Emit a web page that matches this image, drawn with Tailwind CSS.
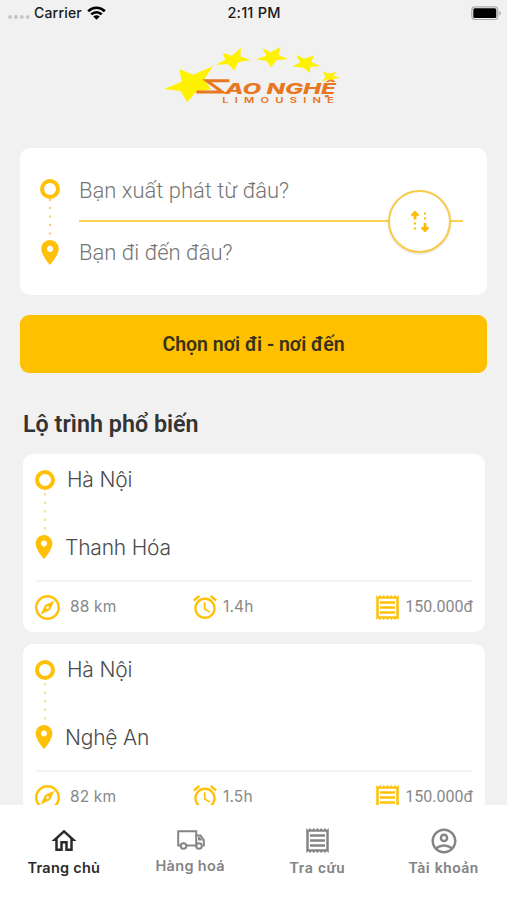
<!DOCTYPE html>
<html lang="vi">
<head>
    <meta charset="UTF-8">
    <meta name="viewport" content="width=device-width, initial-scale=1.0">
    <title>Sao Nghệ Limousine</title>
    <script src="https://cdn.jsdelivr.net/npm/@tailwindcss/browser@4"></script>
</head>
<body class="bg-[#f1f1f1] font-['Inter','Liberation_Sans',sans-serif]">
    <!-- Shared icons -->
    <svg class="hidden">
        <symbol id="pin" viewBox="5 2 14 20"><path d="M12 2C8.13 2 5 5.13 5 9c0 5.25 7 13 7 13s7-7.75 7-13c0-3.87-3.13-7-7-7zm0 9.5c-1.38 0-2.5-1.12-2.5-2.5s1.12-2.5 2.5-2.5 2.5 1.12 2.5 2.5-1.12 2.5-2.5 2.5z"/></symbol>
        <symbol id="compass" viewBox="2 2 20 20"><path d="M12 2C6.48 2 2 6.48 2 12s4.48 10 10 10 10-4.48 10-10S17.52 2 12 2zm0 18c-4.41 0-8-3.59-8-8s3.59-8 8-8 8 3.59 8 8-3.59 8-8 8zm-5.5-2.5l7.51-3.49L17.5 6.5 9.99 9.99 6.5 17.5zm5.5-6.6c.61 0 1.1.49 1.1 1.1s-.49 1.1-1.1 1.1-1.1-.49-1.1-1.1.49-1.1 1.1-1.1z"/></symbol>
        <symbol id="alarm" viewBox="2 1.86 20 20.14"><path d="M22 5.72l-4.6-3.86-1.29 1.53 4.6 3.86L22 5.72zM7.88 3.39L6.6 1.86 2 5.71l1.29 1.53 4.59-3.85zM12.5 8H11v6l4.75 2.85.75-1.23-4-2.37V8zM12 4c-4.97 0-9 4.03-9 9s4.02 9 9 9c4.97 0 9-4.03 9-9s-4.03-9-9-9zm0 16c-3.87 0-7-3.13-7-7s3.13-7 7-7 7 3.13 7 7-3.13 7-7 7z"/></symbol>
        <symbol id="receipt" viewBox="3 2 18 20"><path d="M19.5 3.5L18 2l-1.5 1.5L15 2l-1.5 1.5L12 2l-1.5 1.5L9 2 7.5 3.5 6 2 4.5 3.5 3 2v20l1.5-1.5L6 22l1.5-1.5L9 22l1.5-1.5L12 22l1.5-1.5L15 22l1.5-1.5L18 22l1.5-1.5L21 22V2l-1.5 1.5zM19 19.09H5V4.91h14v14.18zM6 15h12v2H6zm0-4h12v2H6zm0-4h12v2H6z"/></symbol>
    </svg>

    <div class="flex h-[900px] w-[507px] flex-col overflow-hidden">
        <!-- Status bar -->
        <header class="grid h-[26px] shrink-0 grid-cols-3 items-center pr-[6px] pl-2 text-[14px] font-medium text-[#1a1a1a]">
            <div class="-mt-[1px] flex items-center">
                <svg class="mt-2 h-1 w-[22px] fill-[#c4c4c4]" viewBox="0 0 22 4"><circle cx="2" cy="2" r="1.9"/><circle cx="7.9" cy="2" r="1.9"/><circle cx="13.8" cy="2" r="1.9"/><circle cx="19.6" cy="2" r="1.9"/></svg>
                <span class="ml-1 tracking-[0.2px]">Carrier</span>
                <svg class="ml-[5px] h-[14px] w-[19px] fill-none stroke-black stroke-[2.7]" viewBox="0 0 19 14"><path d="M1.2 5.2a11.7 11.7 0 0 1 16.6 0M4.3 8.4a7.4 7.4 0 0 1 10.4 0"/><path class="fill-black stroke-none" d="M6.3 10.5a4.6 4.6 0 0 1 6.4 0L9.5 13.8z"/></svg>
            </div>
            <span class="-ml-[1px] -mt-[1px] text-center text-[14.5px] tracking-[0.2px]">2:11 PM</span>
            <svg class="h-[14px] w-[30px] justify-self-end" viewBox="0 0 30 14"><rect x=".8" y=".8" width="26" height="12.8" rx="3.4" fill="none" stroke="#aaa" stroke-width="1.2"/><rect x="2.3" y="2.3" width="23" height="9.8" rx="1.6"/><path d="M28.3 5v4.4q1.5-.5 1.5-2.2T28.3 5z" fill="#aaa"/></svg>
        </header>

        <main class="flex min-h-0 flex-1 flex-col overflow-hidden">
            <!-- Logo -->
            <div class="mt-[14px] ml-[155px] h-[70px] w-[195px] shrink-0">
                <svg class="h-full w-full" viewBox="0 0 585 210">
                    <g fill="#fff200">
                        <path d="M73 87L114 104 174 79 148 118 168 148 122 156 97 187 76 153 27 147 80 125z"/>
                        <path d="M203 38L231 47 258 23 256 49 286 60 250 67 238 91 219 73 182 74 211 59z"/>
                        <path d="M322 25L347 37 377 21 370 44 399 57 365 61 348 82 335 63 303 58 334 47z"/>
                        <path d="M423 45L449 56 477 46 469 66 496 78 466 81 464 100 447 84 412 79 436 67z"/>
                        <path d="M504 94L522 101 544 95 535 107 556 113 535 117 534 128 519 118 499 126 511 112z"/>
                    </g>
                    <path d="M223 122H155L202 156H124" fill="none" stroke="#e87722" stroke-width="9"/>
                    <g class="font-['Inter','Liberation_Sans',sans-serif]" fill="#e87722">
                        <text class="text-[42px] font-extrabold italic" x="210" y="162" textLength="333" lengthAdjust="spacingAndGlyphs">AO NGHỆ</text>
                        <g transform="translate(202 189) scale(1.4 1)"><text class="text-[24px] font-semibold" x="0" y="0" textLength="239">LIMOUSINE</text></g>
                    </g>
                </svg>
            </div>

            <!-- Search -->
            <section class="relative mx-5 mt-[38px] flex h-[147px] shrink-0 rounded-[10px] bg-white pr-6 pl-5">
                <div class="flex w-[39px] flex-col pt-[31px]">
                    <div class="h-5 w-5 shrink-0 rounded-full border-[4px] border-[#ffc107]"></div>
                    <svg class="ml-2 h-[41px] w-1 fill-[#f5cf55]" viewBox="0 0 4 41"><path d="M1 0h2v2h-2zm0 8h2v2h-2zm0 8.5h2v2h-2zm0 8.5h2v2h-2zm0 8.5h2v2h-2z"/></svg>
                    <svg class="ml-[1px] h-[25px] w-[18px] fill-[#ffc107]"><use href="#pin"/></svg>
                </div>
                <div class="flex flex-1 flex-col font-['Roboto','Liberation_Sans',sans-serif] text-[22px] font-light text-[#757575]">
                    <div class="flex h-[74px] items-center border-b-2 border-[#fdd050] pt-[12px]">Bạn xuất phát từ đâu?</div>
                    <div class="flex h-[61px] items-center">Bạn đi đến đâu?</div>
                </div>
                <button class="absolute top-[42px] right-[36px] flex h-[63px] w-[63px] items-center justify-center rounded-full border-2 border-[#f8cb4c] bg-white shadow">
                    <svg class="h-[23px] w-[19px] fill-[#fbbc05]" viewBox="0 0 19 23"><path d="M5 .5l4.2 4.3-1.2 1.7-1.6-1v4H3.6v-4l-1.6 1L.8 4.8zM15 22.5l-4.2-4.3 1.2-1.7 1.6 1v-4.5h2.8v4.5l1.6-1 1.2 1.7z"/><path d="M3.9 12.5h2v2h-2zm0 5h2v2h-2zM14 2.5h2v2h-2zm0 5h2v2h-2z"/></svg>
                </button>
            </section>

            <button class="mx-5 mt-5 h-[58px] shrink-0 rounded-[9px] bg-[#ffc000] pt-[1px] font-['Roboto','Liberation_Sans',sans-serif] text-[19.5px] font-semibold text-[#38311c]">Chọn nơi đi - nơi đến</button>

            <h2 class="mt-[36px] ml-[23px] h-[30px] shrink-0 font-['Roboto','Liberation_Sans',sans-serif] text-[23.3px] leading-[30px] font-semibold text-[#333]">Lộ trình phổ biến</h2>

            <!-- Popular routes -->
            <div class="mr-[22px] ml-[23px] mt-[15px] flex flex-col gap-3">
                <article class="h-[178px] shrink-0 rounded-[10px] bg-white px-3">
                    <div class="flex h-[126px]">
                        <div class="flex w-[30px] flex-col pt-[16px]">
                            <div class="h-5 w-5 shrink-0 rounded-full border-[4px] border-[#ffc107]"></div>
                            <svg class="ml-2 h-[45px] w-1 fill-[#f7e08a]" viewBox="0 0 4 45"><path d="M1 3h2v2.5h-2zm0 8.5h2v2.5h-2zm0 8.5h2v2.5h-2zm0 8.5h2v2.5h-2zm0 8.5h2v2.5h-2z"/></svg>
                            <svg class="h-6 w-[18px] fill-[#ffc107]"><use href="#pin"/></svg>
                        </div>
                        <div class="flex flex-1 flex-col pt-3 text-[21px] leading-7 font-light tracking-[-0.2px] text-[#4c4c4c]">
                            <span class="ml-[2px]">Hà Nội</span>
                            <span class="mt-10">Thanh Hóa</span>
                        </div>
                    </div>
                    <div class="ml-[1px] flex h-[52px] items-center border-t-2 border-[#f3f3f3] text-[15.5px] text-[#888]">
                        <svg class="-ml-[1px] h-[25px] w-[25px] fill-[#ffc107]"><use href="#compass"/></svg>
                        <span class="ml-[10px] w-[123px] tracking-[0.15px]">88 km</span>
                        <svg class="h-6 w-6 fill-[#ffc107]"><use href="#alarm"/></svg>
                        <span class="ml-[6px] tracking-[0.15px]">1.4h</span>
                        <svg class="ml-auto h-[25px] w-[23px] fill-[#ffc107]"><use href="#receipt"/></svg>
                        <span class="ml-[6px] font-['Roboto','Liberation_Sans',sans-serif] text-[16px]">150.000đ</span>
                    </div>
                </article>
                <article class="h-[178px] shrink-0 rounded-[10px] bg-white px-3">
                    <div class="flex h-[126px]">
                        <div class="flex w-[30px] flex-col pt-[16px]">
                            <div class="h-5 w-5 shrink-0 rounded-full border-[4px] border-[#ffc107]"></div>
                            <svg class="ml-2 h-[45px] w-1 fill-[#f7e08a]" viewBox="0 0 4 45"><path d="M1 3h2v2.5h-2zm0 8.5h2v2.5h-2zm0 8.5h2v2.5h-2zm0 8.5h2v2.5h-2zm0 8.5h2v2.5h-2z"/></svg>
                            <svg class="h-6 w-[18px] fill-[#ffc107]"><use href="#pin"/></svg>
                        </div>
                        <div class="flex flex-1 flex-col pt-3 text-[21px] leading-7 font-light tracking-[-0.2px] text-[#4c4c4c]">
                            <span class="ml-[2px]">Hà Nội</span>
                            <span class="mt-10">Nghệ An</span>
                        </div>
                    </div>
                    <div class="ml-[1px] flex h-[52px] items-center border-t-2 border-[#f3f3f3] text-[15.5px] text-[#888]">
                        <svg class="-ml-[1px] h-[25px] w-[25px] fill-[#ffc107]"><use href="#compass"/></svg>
                        <span class="ml-[10px] w-[123px] tracking-[0.15px]">82 km</span>
                        <svg class="h-6 w-6 fill-[#ffc107]"><use href="#alarm"/></svg>
                        <span class="ml-[6px] tracking-[0.15px]">1.5h</span>
                        <svg class="ml-auto h-[25px] w-[23px] fill-[#ffc107]"><use href="#receipt"/></svg>
                        <span class="ml-[6px] font-['Roboto','Liberation_Sans',sans-serif] text-[16px]">150.000đ</span>
                    </div>
                </article>
            </div>
        </main>

        <!-- Bottom tabs -->
        <nav class="grid h-[95px] shrink-0 grid-cols-4 bg-white text-[14.5px] font-semibold text-[#858585]">
            <a href="#" class="flex flex-col items-center pt-[21px] text-[#2b2b2b]">
                <svg class="ml-[1px] h-[30px] w-[30px] fill-current" viewBox="0 0 24 24"><path d="M12 5.69l5 4.5V18h-2v-6H9v6H7v-7.81l5-4.5M12 3L2 12h3v8h6v-6h2v6h6v-8h3L12 3z"/></svg>
                <span class="mt-[1px] ml-[1px] tracking-[0.25px]">Trang chủ</span>
            </a>
            <a href="#" class="flex flex-col items-center pt-[24px]">
                <svg class="ml-[1px] h-[22px] w-[28px] fill-none stroke-current stroke-2" viewBox="0 0 28 22"><path d="M3.5 16.5H1.2V2.2h18v14.3H9.5M19.2 6.5h4.3l3.3 4.5v5.5h-1"/><path class="fill-current stroke-none" d="M21 8h2l2.6 3.5H21z"/><circle cx="6.5" cy="17" r="2.8"/><circle cx="22" cy="17" r="2.8"/></svg>
                <span class="mt-[4px] tracking-[0.3px]">Hàng hoá</span>
            </a>
            <a href="#" class="flex flex-col items-center pt-[23px]">
                <svg class="ml-[1px] h-[25px] w-[23px] fill-current"><use href="#receipt"/></svg>
                <span class="mt-[4px] ml-[1px] font-['Roboto','Liberation_Sans',sans-serif] text-[15px] tracking-[0.7px]">Tra cứu</span>
            </a>
            <a href="#" class="flex flex-col items-center pt-[21px]">
                <svg class="h-[30px] w-[30px] fill-current" viewBox="0 0 24 24"><path d="M12 2C6.48 2 2 6.48 2 12s4.48 10 10 10 10-4.48 10-10S17.52 2 12 2zM7.07 18.28c.43-.9 3.05-1.78 4.93-1.78s4.51.88 4.93 1.78C15.57 19.36 13.86 20 12 20s-3.57-.64-4.93-1.72zm11.29-1.45c-1.43-1.74-4.9-2.33-6.36-2.33s-4.93.59-6.36 2.33C4.62 15.49 4 13.82 4 12c0-4.41 3.59-8 8-8s8 3.59 8 8c0 1.82-.62 3.49-1.64 4.83zM12 6c-1.94 0-3.5 1.56-3.5 3.5S10.06 13 12 13s3.5-1.56 3.5-3.5S13.94 6 12 6zm0 5c-.83 0-1.5-.67-1.5-1.5S11.17 8 12 8s1.5.67 1.5 1.5S12.83 11 12 11z"/></svg>
                <span class="mt-[1px] font-['Roboto','Liberation_Sans',sans-serif] text-[15px] tracking-[0.6px]">Tài khoản</span>
            </a>
        </nav>
    </div>
</body>
</html>
